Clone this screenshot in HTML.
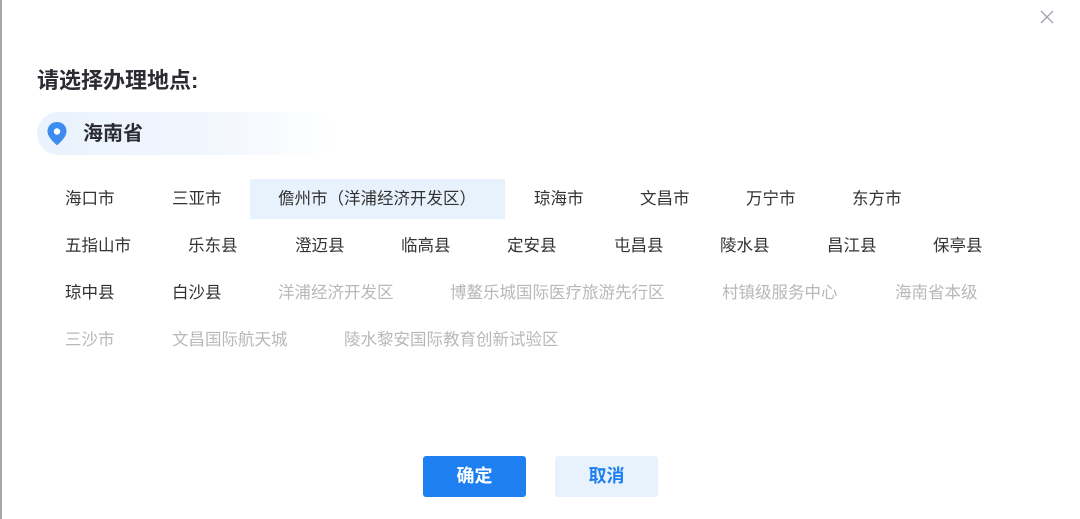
<!DOCTYPE html>
<html><head><meta charset="utf-8"><style>
body{margin:0;width:1080px;height:519px;background:#fff;position:relative;overflow:hidden;font-family:"Liberation Sans","Noto Sans CJK SC",sans-serif;}
.edge{position:absolute;left:0;top:0;width:2px;height:519px;background:#a8a8a8;}
.t{position:absolute;white-space:nowrap;font-size:16.5px;line-height:20px;color:#333;}
.g{color:#b8b8b8;}
.title{position:absolute;left:37px;top:63px;font-size:22px;font-weight:bold;color:#2b2b33;}
.pill{position:absolute;left:37px;top:112px;width:300px;height:43px;border-radius:22px;background:linear-gradient(90deg,#e9f2fd 0%,#f2f7fe 60%,#fff 100%);}
.hl{position:absolute;left:250px;top:179px;width:255px;height:40px;background:#e8f2fd;}
.btn{position:absolute;top:456px;width:103px;height:41px;border-radius:3px;font-size:18px;font-weight:bold;line-height:41px;text-align:center;}
</style></head><body>
<div class="edge"></div>
<svg style="position:absolute;left:1040px;top:10px" width="14" height="14"><path d="M1 1L13 13M13 1L1 13" stroke="#a0a3ad" stroke-width="1.3"/></svg>
<div class="title">请选择办理地点:</div>
<div class="pill"></div>
<svg style="position:absolute;left:45px;top:121px" width="24" height="26" viewBox="0 0 24 26"><path d="M12 1C6.5 1 2.5 5 2.5 10.3c0 5.6 6 11 9.5 14 3.5-3 9.5-8.4 9.5-14C21.5 5 17.5 1 12 1z" fill="#3d8cf0"/><circle cx="12" cy="10.5" r="3.2" fill="#fff"/></svg>
<div class="t" style="left:83px;top:122px;font-size:20px;line-height:24px;font-weight:bold;color:#2b2b33">海南省</div>
<div class="hl"></div>
<div class="t" style="left:65px;top:189px">海口市</div>
<div class="t" style="left:172px;top:189px">三亚市</div>
<div class="t" style="left:278px;top:189px">儋州市（洋浦经济开发区）</div>
<div class="t" style="left:534px;top:189px">琼海市</div>
<div class="t" style="left:640px;top:189px">文昌市</div>
<div class="t" style="left:746px;top:189px">万宁市</div>
<div class="t" style="left:852px;top:189px">东方市</div>
<div class="t" style="left:65px;top:236px">五指山市</div>
<div class="t" style="left:188px;top:236px">乐东县</div>
<div class="t" style="left:295px;top:236px">澄迈县</div>
<div class="t" style="left:401px;top:236px">临高县</div>
<div class="t" style="left:507px;top:236px">定安县</div>
<div class="t" style="left:614px;top:236px">屯昌县</div>
<div class="t" style="left:720px;top:236px">陵水县</div>
<div class="t" style="left:827px;top:236px">昌江县</div>
<div class="t" style="left:933px;top:236px">保亭县</div>
<div class="t" style="left:65px;top:283px">琼中县</div>
<div class="t" style="left:172px;top:283px">白沙县</div>
<div class="t g" style="left:278px;top:283px">洋浦经济开发区</div>
<div class="t g" style="left:450px;top:283px">博鳌乐城国际医疗旅游先行区</div>
<div class="t g" style="left:722px;top:283px">村镇级服务中心</div>
<div class="t g" style="left:895px;top:283px">海南省本级</div>
<div class="t g" style="left:65px;top:330px">三沙市</div>
<div class="t g" style="left:172px;top:330px">文昌国际航天城</div>
<div class="t g" style="left:344px;top:330px">陵水黎安国际教育创新试验区</div>
<div class="btn" style="left:423px;background:#1d7ff0;color:#fff">确定</div>
<div class="btn" style="left:555px;background:#e8f2fd;color:#1d7ff0">取消</div>
</body></html>
